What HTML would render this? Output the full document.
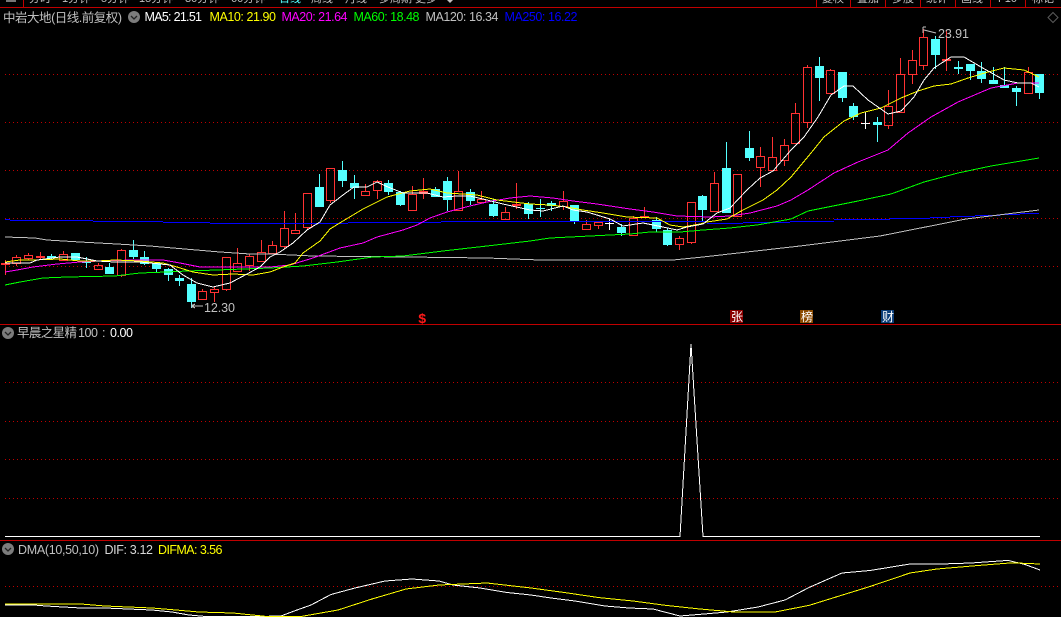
<!DOCTYPE html>
<html lang="zh">
<head>
<meta charset="utf-8">
<title>中岩大地</title>
<style>
html,body{margin:0;padding:0;background:#000;width:1061px;height:617px;overflow:hidden}
svg{display:block}
text{font-family:"Liberation Sans","Noto Sans CJK SC",sans-serif;font-size:12.5px}
.g{fill:#c0c0c0}
.t text{font-size:11px}
</style>
</head>
<body>
<svg width="1061" height="617" viewBox="0 0 1061 617" xmlns="http://www.w3.org/2000/svg">
<rect width="1061" height="617" fill="#000"/>

<!-- top tabs -->
<g class="t" fill="#c0c0c0">
<text x="29" y="2">分时</text><text x="62" y="2">1分钟</text><text x="101" y="2">5分钟</text><text x="139" y="2">15分钟</text><text x="185" y="2">30分钟</text><text x="231" y="2">60分钟</text>
<text x="279" y="2" style="fill:#54ffff">日线</text><text x="311" y="2">周线</text><text x="345" y="2">月线</text><text x="379" y="2">多周期</text><text x="415" y="2">更多</text>
<text x="822" y="2">复权</text><text x="857" y="2">叠加</text><text x="892" y="2">多股</text><text x="926" y="2">统计</text><text x="961" y="2">画线</text><text x="998" y="2">F10</text><text x="1032" y="2">标记</text>
</g>
<path d="M6 0v2h10v-2z" fill="#777"/>
<path d="M447 0l3 3 3-3z" fill="#c0c0c0"/>
<g shape-rendering="crispEdges" stroke="#c00000" fill="none">
<path d="M0 7.5H1061M23.5 0V7M816.5 0V7M850.5 0V7M885.5 0V7M920.5 0V7M955.5 0V7M990.5 0V7M1025.5 0V7"/>
<path d="M0 324.5H1061M0 540.5H1061"/>
</g>

<!-- dotted grids -->
<g stroke="#c00000" stroke-dasharray="1 3" shape-rendering="crispEdges" fill="none">
<path d="M5 74.5H1061M5 122.5H1061M5 170.5H1061M5 218.5H1061M5 266.5H1061"/>
<path d="M5 382.5H1061M5 421.5H1061M5 459.5H1061M5 498.5H1061"/>
<path d="M5 586.5H1061"/>
</g>

<!-- header main -->
<text x="3" y="22" class="g" textLength="119">中岩大地(日线.前复权)</text>
<circle cx="134" cy="17" r="6" fill="#7c7c7c"/><path d="M131 16l3 3 3-3" stroke="#222" stroke-width="1.3" fill="none"/>
<text x="144.5" y="21" fill="#ffffff" textLength="57.5">MA5: 21.51</text>
<text x="209.5" y="21" fill="#ffff00" textLength="66.5">MA10: 21.90</text>
<text x="281.5" y="21" fill="#ff00ff" textLength="66">MA20: 21.64</text>
<text x="353.5" y="21" fill="#00ff00" textLength="66">MA60: 18.48</text>
<text x="425.5" y="21" class="g" textLength="73">MA120: 16.34</text>
<text x="504.5" y="21" fill="#0000ff" textLength="73">MA250: 16.22</text>
<path d="M1053 12.5l5 5-5 5-5-5z" fill="none" stroke="#5a5a5a"/>

<!-- red hollow candles -->
<path fill="none" stroke="#ff3232" shape-rendering="crispEdges" d="
M16.5 255V257M12.5 257.5h8V263.5h-8zM16.5 264V266
M28.5 253V255M24.5 255.5h8V258.5h-8zM28.5 259V260
M63.5 251V254M59.5 254.5h8V260.5h-8zM63.5 261V261
M98.5 263V265M94.5 265.5h8V269.5h-8zM98.5 270V270
M121.5 249V250M117.5 250.5h8V275.5h-8zM121.5 276V277
M202.5 289V291M198.5 291.5h8V299.5h-8z
M214.5 287V289M210.5 289.5h8V292.5h-8zM214.5 293V302
M226.5 257V257M222.5 257.5h8V289.5h-8zM226.5 290V291
M237.5 248V263M233.5 263.5h8V271.5h-8zM237.5 272V272
M249.5 254V256M245.5 256.5h8V265.5h-8zM249.5 266V271
M261.5 240V252M257.5 252.5h8V261.5h-8zM261.5 262V262
M272.5 241V245M268.5 245.5h8V253.5h-8zM272.5 254V254
M284.5 211V228M280.5 228.5h8V246.5h-8zM284.5 247V249
M295.5 213V230M291.5 230.5h8V233.5h-8z
M307.5 193V193M303.5 193.5h8V227.5h-8zM307.5 228V230
M330.5 168V168M326.5 168.5h8V200.5h-8zM330.5 201V203
M365.5 184V191M361.5 191.5h8V195.5h-8z
M377.5 180V181M373.5 181.5h8V190.5h-8zM377.5 191V199
M412.5 186V194M408.5 194.5h8V210.5h-8z
M458.5 171V191M454.5 191.5h8V210.5h-8z
M481.5 191V199M477.5 199.5h8V202.5h-8zM481.5 203V203
M505.5 207V212M501.5 212.5h8V219.5h-8zM505.5 220V220
M563.5 191V201M559.5 201.5h8V206.5h-8zM563.5 207V210
M586.5 220V224M582.5 224.5h8V229.5h-8zM586.5 230V230
M598.5 222V222M594.5 222.5h8V225.5h-8zM598.5 226V229
M633.5 216V218M629.5 218.5h8V235.5h-8z
M679.5 236V238M675.5 238.5h8V244.5h-8zM679.5 245V250
M691.5 202V202M687.5 202.5h8V242.5h-8zM691.5 243V244
M714.5 172V183M710.5 183.5h8V211.5h-8z
M737.5 174V174M733.5 174.5h8V216.5h-8z
M760.5 147V156M756.5 156.5h8V167.5h-8zM760.5 168V187
M772.5 137V157M768.5 157.5h8V170.5h-8z
M784.5 139V145M780.5 145.5h8V160.5h-8zM784.5 161V166
M795.5 103V113M791.5 113.5h8V143.5h-8z
M807.5 65V67M803.5 67.5h8V122.5h-8zM807.5 123V128
M830.5 69V70M826.5 70.5h8V93.5h-8z
M888.5 90V106M884.5 106.5h8V125.5h-8zM888.5 126V129
M900.5 58V74M896.5 74.5h8V112.5h-8z
M912.5 50V60M908.5 60.5h8V74.5h-8zM912.5 75V84
M923.5 29V37M919.5 37.5h8V65.5h-8zM923.5 66V70
M1028.5 67V72M1024.5 72.5h8V93.5h-8zM1028.5 94V94
M5.5 260V275M40.5 252V260M423.5 178V199M516.5 183V209M644.5 207V218M946.5 30V71"/>
<!-- red filled -->
<path fill="#ff3232" shape-rendering="crispEdges" d="M1 263h9v2h-9zM36 256h9v2h-9zM419 191h9v3h-9zM512 204h9v2h-9zM640 216h9v2h-9zM942 59h9v2h-9z"/>

<!-- cyan candles wicks -->
<path fill="none" stroke="#54ffff" shape-rendering="crispEdges" d="
M51.5 254V259M75.5 253V260M86.5 257V268M109.5 263V274M133.5 240V259M144.5 251V265M156.5 262V273M168.5 268V281M179.5 275V286M191.5 278V308
M319.5 174V207M342.5 161V187M354.5 175V199M388.5 180V195M400.5 191V206M435.5 187V197M447.5 177V211M470.5 189V205M493.5 199V217M528.5 202V219
M540.5 199V217M551.5 201V211M574.5 205V224M621.5 224V236M656.5 217V232M667.5 228V246M702.5 195V221M726.5 142V213M749.5 131V161
M819.5 57V101M842.5 72V102M853.5 103V120M877.5 117V142M935.5 36V69M958.5 61V74M970.5 64V80M981.5 62V83M993.5 67V84M1004.5 67V88M1016.5 86V106M1039.5 74V99"/>
<!-- cyan bodies -->
<path fill="#54ffff" shape-rendering="crispEdges" d="
M47 256h9v2h-9zM71 253h9v7h-9zM82 262h9v1h-9zM105 267h9v7h-9zM129 250h9v7h-9zM140 257h9v7h-9zM152 263h9v6h-9zM164 269h9v6h-9zM175 278h9v3h-9zM187 284h9v18h-9z
M315 187h9v20h-9zM338 170h9v11h-9zM350 183h9v5h-9zM384 183h9v9h-9zM396 192h9v13h-9zM431 189h9v8h-9zM443 181h9v19h-9zM466 192h9v9h-9zM489 204h9v12h-9zM524 204h9v10h-9z
M536 208h9v1h-9zM547 203h9v3h-9zM570 205h9v16h-9zM617 227h9v6h-9zM652 220h9v9h-9zM663 230h9v15h-9zM698 196h9v14h-9zM722 168h9v45h-9zM745 148h9v10h-9z
M815 66h9v12h-9zM838 72h9v26h-9zM849 106h9v11h-9zM873 122h9v3h-9zM931 39h9v16h-9zM954 67h9v2h-9zM966 64h9v7h-9zM977 71h9v8h-9zM989 80h9v4h-9zM1000 85h9v3h-9zM1012 88h9v4h-9zM1035 74h9v19h-9z"/>
<!-- white crosses -->
<path stroke="#fff" fill="none" shape-rendering="crispEdges" d="M609.5 219V230M605 223.5h9M865.5 112V129M861 123.5h9"/>

<!-- MA lines -->
<path fill="#0000ff" shape-rendering="crispEdges" d="M5 219h5v1h-5zM10 220h83v1h-83zM93 221h70v1h-70zM163 222h47v1h-47zM210 223h138v1h-138zM348 222h93v1h-93zM441 221h266v1h-266zM707 223h36v1h-36zM743 222h47v1h-47zM790 221h44v1h-44zM834 219h56v1h-56zM890 218h40v1h-40zM930 217h20v1h-20zM950 216h25v1h-25zM975 215h25v1h-25zM1000 214h20v1h-20zM1020 213h19v1h-19z"/>
<g fill="none" shape-rendering="crispEdges" stroke-width="1">
<path stroke="#c0c0c0" d="M5 237 35 238 47 240 80 242 117 244 150 246 173 248 220 252 250 254 270 254 313 256 407 257 487 258 540 260 673 260 703 257 747 252 800 246 880 236 966 219 1039 210"/>
<path stroke="#00ff00" d="M5 285 20 282 43 278 67 277 115 276 140 273 167 272 187 271 217 270 270 268 303 266 337 262 373 257 403 256 443 251 487 246 530 241 550 238 590 236 630 234 650 232 680 232 703 230 730 228 757 225 791 219 808 211 858 201 891 194 924 182 958 173 991 166 1039 158"/>
<path stroke="#ff00ff" d="M5 272 17 270 33 267 57 264 80 262 100 261 133 260 163 260 180 263 200 267 233 267 270 267 290 265 313 258 340 248 363 243 377 237 403 230 417 225 430 218 447 212 470 206 487 202 510 198 530 196 553 198 573 201 597 204 630 209 653 212 677 216 710 217 730 216 750 213 777 206 791 200 808 190 834 173 858 162 888 150 908 133 931 117 958 102 991 88 1018 83 1039 83"/>
<path stroke="#ffff00" d="M5 262 20 260 33 260 60 259 80 261 97 261 115 260 140 261 163 263 177 267 193 272 213 275 233 274 253 275 270 272 283 267 295 263 303 253 320 241 330 229 343 221 363 209 387 197 410 191 430 189 447 193 477 195 497 200 530 204 550 205 567 207 583 210 603 213 627 217 657 218 670 225 683 227 700 224 707 222 727 219 743 210 763 200 777 190 791 177 811 153 824 137 844 121 861 113 881 108 901 98 918 91 934 86 951 84 968 78 988 72 1004 68 1024 70 1039 77"/>
<path stroke="#ffffff" d="M5 263 30 263 37 260 60 257 77 257 97 261 115 262 140 262 170 265 183 275 197 283 213 287 230 283 247 274 260 267 270 257 280 252 293 243 307 230 320 222 330 205 343 195 354 187 367 187 377 182 388 187 403 193 427 193 443 197 457 196 470 196 487 200 503 204 530 210 543 211 563 206 573 210 587 212 610 219 623 226 643 223 663 227 677 230 687 227 703 224 717 213 730 208 747 190 760 178 773 171 791 150 804 137 818 117 831 95 844 86 853 86 868 100 888 114 901 111 914 97 924 80 934 68 951 57 964 57 981 67 1004 80 1018 83 1031 83 1039 87"/>
</g>

<!-- high/low labels -->
<path d="M192 304V308M192 306h11M192 306l3-2M192 306l3 2" stroke="#c0c0c0" fill="none" shape-rendering="crispEdges"/>
<text x="204" y="312" class="g" textLength="31">12.30</text>
<path d="M923 27v6M923 27h3M924 30l4 1M928 31l8 2" stroke="#c0c0c0" fill="none"/>
<text x="938" y="38" class="g" textLength="31">23.91</text>

<!-- markers -->
<text x="418" y="323" fill="#ff1a1a" font-weight="bold" style="font-size:14px;font-family:'Liberation Mono',monospace">$</text>
<rect x="730" y="310" width="13" height="13" fill="#8b0000"/>
<text x="731" y="321" fill="#fff" style="font-size:12px">张</text>
<rect x="800" y="310" width="13" height="13" fill="#8b4a00"/>
<text x="801" y="321" fill="#fff" style="font-size:12px">榜</text>
<rect x="881" y="310" width="13" height="13" fill="#0b3d78"/>
<text x="882" y="321" fill="#fff" style="font-size:12px">财</text>

<!-- pane 2 -->
<circle cx="8" cy="333" r="6" fill="#7c7c7c"/><path d="M5 332l3 3 3-3" stroke="#222" stroke-width="1.3" fill="none"/>
<text x="17" y="337" class="g" textLength="60">早晨之星精</text>
<text x="78" y="337" class="g" textLength="20">100</text>
<text x="102" y="337" class="g">:</text>
<text x="110" y="337" fill="#fff" textLength="23">0.00</text>
<path d="M5 536.5H680L691 344 703 536.5H1040" fill="none" stroke="#fff" stroke-width="1" shape-rendering="crispEdges"/>

<!-- pane 3 -->
<circle cx="8" cy="549" r="6" fill="#7c7c7c"/><path d="M5 548l3 3 3-3" stroke="#222" stroke-width="1.3" fill="none"/>
<text x="18" y="554" class="g" textLength="81">DMA(10,50,10)</text>
<text x="104.5" y="554" fill="#d8d8d8" textLength="48.5">DIF: 3.12</text>
<text x="158" y="554" fill="#ffff00" textLength="64.5">DIFMA: 3.56</text>
<g fill="none" shape-rendering="crispEdges" stroke-width="1">
<path stroke="#ffffff" d="M5 605 34 605 46 606 81 608 105 608 128 609 152 610 172 612 189 615 206 616.5 257 616.5 281 616 297 610 311 605 331 594.5 355 588 385 581 412 579 439 581 453 585 480 588 507 592.5 531 595 551 598 575 601 605 606 629 608 653 609 680 616 704 614 727 612 758 607 785 600 809 587.5 842 573 870 570.5 910 564 941 564 971 563 1008 560.4 1025 564.5 1040 570"/>
<path stroke="#ffff00" d="M5 604 81 604 105 606 152 608 176 610 199 612 233 613 267 616.5 301 616.5 338 610 372 599 406 589 439 585 487 583 531 588 565 592.6 599 597.6 633 601 666 605.4 700 609 734 612 775 612 809 605.4 836 597 870 586.5 910 573 937 569 978 565.5 1012 562.8 1040 564"/>
</g>
</svg>
</body>
</html>
